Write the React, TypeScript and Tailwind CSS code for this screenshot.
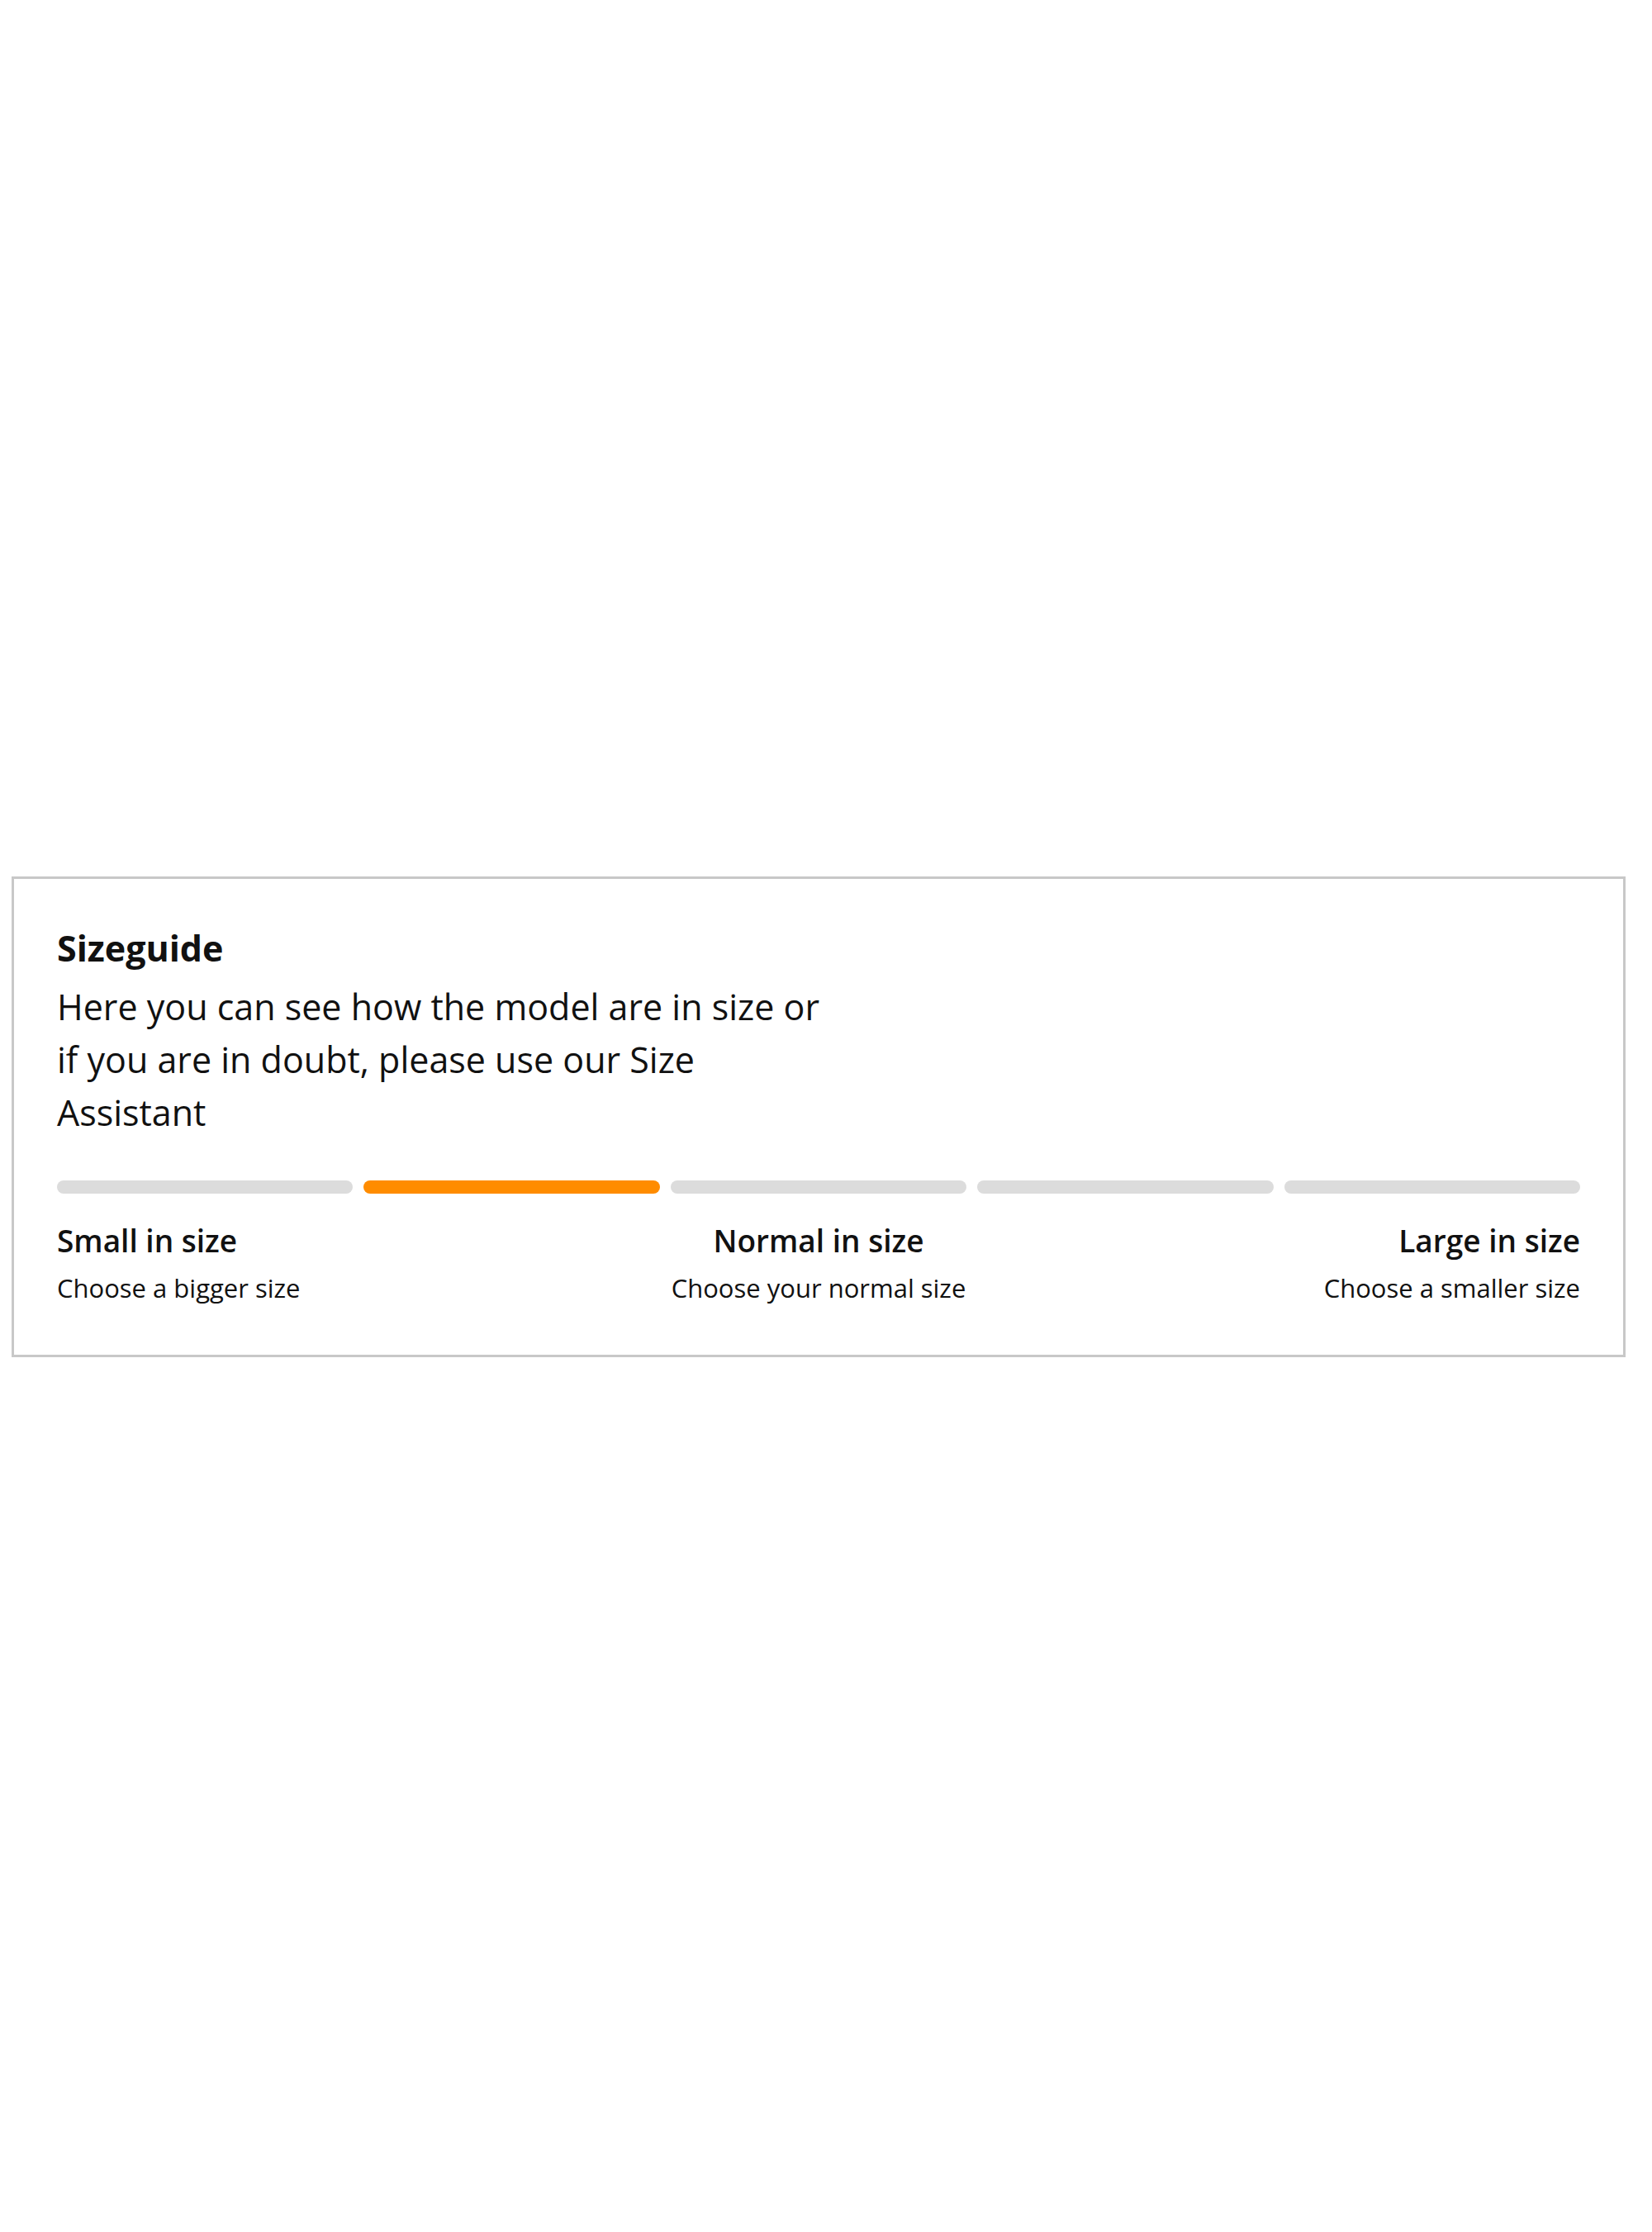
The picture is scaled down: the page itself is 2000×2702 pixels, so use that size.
const segments = [false, true, false, false, false];

const labels = [
  { title: "Small in size", hint: "Choose a bigger size", align: "text-left" },
  { title: "Normal in size", hint: "Choose your normal size", align: "text-center" },
  { title: "Large in size", hint: "Choose a smaller size", align: "text-right" },
];

export default function App() {
  return (
    <div className="min-h-[2702px] bg-white pt-[1061px] font-['Open_Sans',sans-serif] text-[#111]">
      <section className="ml-[14px] w-[1954px] border-[3px] border-[#c8c8c8] bg-white px-[52px] pt-[58px] pb-[61px]">
        <h2 className="text-[43px] font-bold leading-[52px]">Sizeguide</h2>
        <p className="mt-[13px] max-w-[940px] text-[43px] leading-[64px]">
          Here you can see how the model are in size or if you are in doubt,
          please use our Size Assistant
        </p>

        <div className="mt-[50px] flex gap-[13px]">
          {segments.map((active, i) => (
            <div
              key={i}
              className={`h-[16px] flex-1 rounded-full ${
                active ? "bg-[#ff8c00]" : "bg-[#dcdcdc]"
              }`}
            />
          ))}
        </div>

        <div className="mt-[35px] grid grid-cols-3">
          {labels.map((l) => (
            <div key={l.title} className={l.align}>
              <p className="text-[37px] font-semibold leading-[44px]">
                {l.title}
              </p>
              <p className="mt-[15px] text-[31px] leading-[40px]">{l.hint}</p>
            </div>
          ))}
        </div>
      </section>
    </div>
  );
}
